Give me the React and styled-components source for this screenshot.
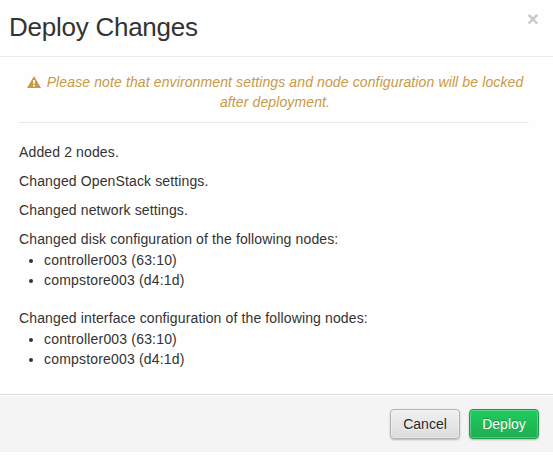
import React from "react";
import styled, { createGlobalStyle } from "styled-components";

const Global = createGlobalStyle`
  * { box-sizing: border-box; }
  body { margin: 0; background: #fff; overflow: hidden; color: #333; font: 14px/20px "Liberation Sans", Arial, sans-serif; }
`;
const Modal = styled.section`
  width: 553px; height: 452px; display: flex; flex-direction: column; background: #fefefe;
`;
const Header = styled.header`
  height: 57px; flex: none; padding: 9px 15px 0 9px; display: flex; justify-content: space-between;
  border-bottom: 1px solid #eaeaea;
`;
const Title = styled.h3`
  margin: 0; font-size: 26px; font-weight: 400; line-height: 36px; letter-spacing: -.25px;
`;
const Close = styled.button`
  margin: 0; padding: 0; border: 0; background: none; width: 11px; height: 20px; color: #c8c8c8;
  font: bold 20px/20px "Liberation Sans", Arial, sans-serif;
`;
const Body = styled.main`
  flex: none; height: 337px; padding: 15px 24px 0 19px; letter-spacing: .13px;
`;
const Warning = styled.div`
  height: 51px; padding-left: 2px; color: #c99a45; font-style: italic; text-align: center; letter-spacing: .12px;
  border-bottom: 1px solid #e9e9e9; margin-bottom: 19px;
`;
const WarnIcon = styled.svg`
  width: 14px; height: 12px; margin-right: 6px; vertical-align: -1px;
`;
const Change = styled.p`
  margin: 0 0 ${(p) => (p.$tight ? 0 : 9)}px;
`;
const Nodes = styled.ul`
  margin: 1px 0 18px; padding: 0 0 0 25px; letter-spacing: .18px;
`;
const Footer = styled.footer`
  flex: none; height: 58px; padding: 14px 14px 0; display: flex; align-items: flex-start;
  justify-content: flex-end; gap: 9px; background: #f4f4f4; border-top: 1px solid #d9d9d9;
  box-shadow: inset 0 1px 0 #fff;
`;
const Button = styled.button`
  width: 70px; height: 30px; padding: 0; border-radius: 4px; font: inherit;
  color: ${(p) => (p.$primary ? "#fff" : "#282828")};
  border: 1px solid ${(p) => (p.$primary ? "#189c47" : "#b3b3b3")};
  background: ${(p) => (p.$primary ? "linear-gradient(#1fcb60, #1fae50)" : "linear-gradient(#f0f0f0, #dcdcdc)")};
  text-shadow: ${(p) => (p.$primary ? "0 -1px 0 rgba(0,0,0,.25)" : "0 1px 1px rgba(255,255,255,.75)")};
  box-shadow: inset 0 0 0 1px rgba(255,255,255,.28), 0 1px 2px rgba(0,0,0,.25);
`;

const NODES = ["controller003 (63:10)", "compstore003 (d4:1d)"];
const NodeChanges = ({ label }) => (
  <>
    <Change $tight>{label}</Change>
    <Nodes>{NODES.map((n) => <li key={n}>{n}</li>)}</Nodes>
  </>
);

export default function App() {
  return (
    <Modal>
      <Global />
      <Header>
        <Title>Deploy Changes</Title>
        <Close aria-label="Close">×</Close>
      </Header>
      <Body>
        <Warning>
          <WarnIcon viewBox="0 0 14 12">
            <path fillRule="evenodd" fill="currentColor" d="M7 0 14 12H0ZM6 4 6.3 8h1.4L8 4ZM6 9v1.6h2V9Z" />
          </WarnIcon>
          Please note that environment settings and node configuration will be locked after deployment.
        </Warning>
        <Change>Added 2 nodes.</Change>
        <Change>Changed OpenStack settings.</Change>
        <Change>Changed network settings.</Change>
        <NodeChanges label="Changed disk configuration of the following nodes:" />
        <NodeChanges label="Changed interface configuration of the following nodes:" />
      </Body>
      <Footer>
        <Button>Cancel</Button>
        <Button $primary>Deploy</Button>
      </Footer>
    </Modal>
  );
}
